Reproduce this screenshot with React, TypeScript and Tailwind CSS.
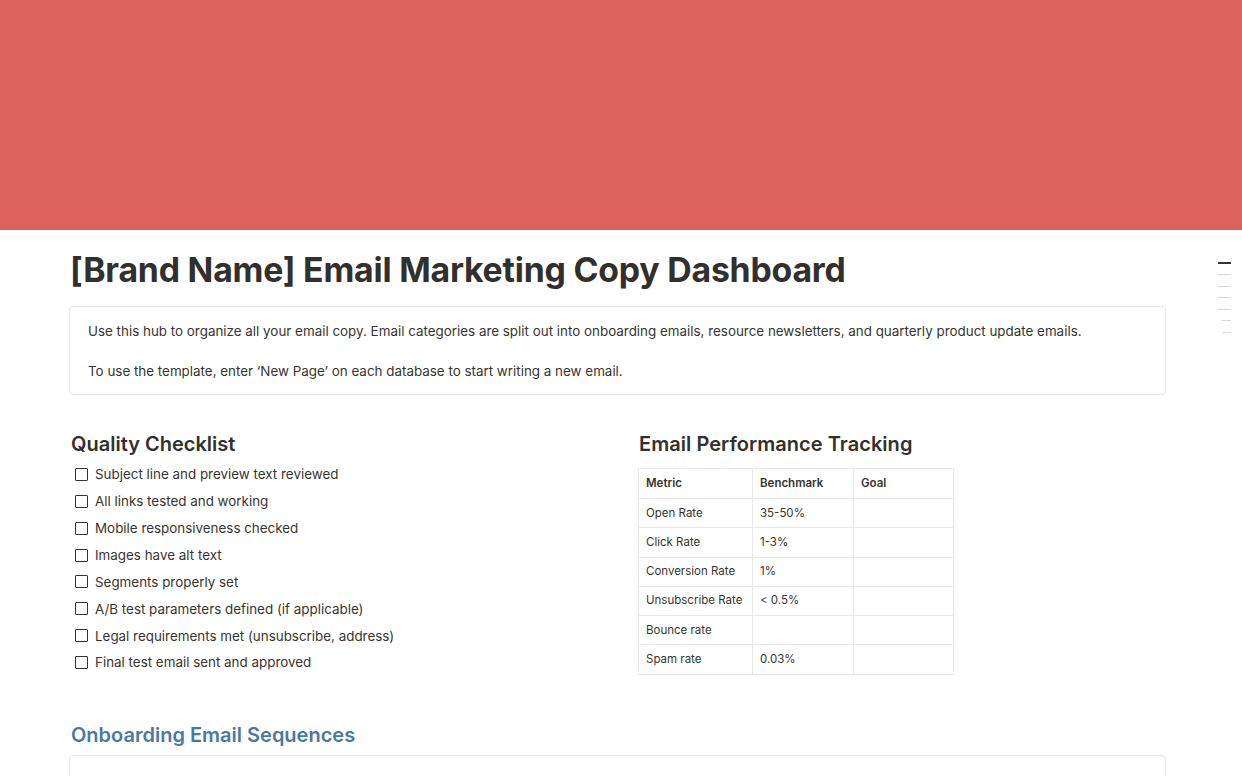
import React from "react";

const checklist = [
  "Subject line and preview text reviewed",
  "All links tested and working",
  "Mobile responsiveness checked",
  "Images have alt text",
  "Segments properly set",
  "A/B test parameters defined (if applicable)",
  "Legal requirements met (unsubscribe, address)",
  "Final test email sent and approved",
];

const rows: [string, string, string][] = [
  ["Open Rate", "35-50%", ""],
  ["Click Rate", "1-3%", ""],
  ["Conversion Rate", "1%", ""],
  ["Unsubscribe Rate", "< 0.5%", ""],
  ["Bounce rate", "", ""],
  ["Spam rate", "0.03%", ""],
];

export default function App() {
  return (
    <div
      className="relative w-[1242px] h-[776px] overflow-hidden bg-white text-[#37352f]"
      style={{ fontFamily: "Inter, 'Noto Sans', sans-serif" }}
    >
      <div className="h-[230px] bg-[#db615d]" />

      {/* TOC lines */}
      <div className="absolute left-[1218px] top-[262px] flex flex-col items-end gap-[10.5px] w-[13px]">
        <div className="h-[1.5px] w-[13px] bg-[#37352f]" />
        <div className="h-[1px] w-[13px] bg-[#d9d9d6]" />
        <div className="h-[1px] w-[13px] bg-[#d9d9d6]" />
        <div className="h-[1px] w-[13px] bg-[#d9d9d6]" />
        <div className="h-[1px] w-[13px] bg-[#d9d9d6]" />
        <div className="h-[1px] w-[9px] bg-[#d9d9d6]" />
        <div className="h-[1px] w-[9px] bg-[#d9d9d6]" />
      </div>

      <div className="pl-[69px] w-[1166px]">
        <h1 className="pt-[18px] pl-[1px] text-[33.8px] leading-[44px] font-bold text-[#32302c] tracking-[-0.2px]">
          [Brand Name] Email Marketing Copy Dashboard
        </h1>

        <div className="mt-[14px] h-[89px] rounded-[4px] border border-[#e6e6e4] px-[18px] pt-[14px] text-[13.4px] leading-[20px] text-[#37352f]">
          <p>
            Use this hub to organize all your email copy. Email categories are split out into onboarding emails, resource newsletters, and quarterly product update emails.
          </p>
          <p className="mt-[20px]">
            To use the template, enter ‘New Page’ on each database to start writing a new email.
          </p>
        </div>

        <div className="mt-[35px] flex">
          <div className="w-[570px] pl-[2px]">
            <h2 className="text-[20px] leading-[28px] font-semibold text-[#32302c]">
              Quality Checklist
            </h2>
            <ul className="mt-[3px] flex flex-col">
              {checklist.map((item) => (
                <li key={item} className="flex items-center h-[26.86px] text-[13.4px] text-[#37352f]">
                  <span className="ml-[4px] mr-[7px] w-[13px] h-[13px] border-[1.5px] border-[#37352f] rounded-[1px]" />
                  {item}
                </li>
              ))}
            </ul>
          </div>

          <div className="flex-1">
            <h2 className="text-[20px] leading-[28px] font-semibold text-[#32302c] tracking-[0.05px]">
              Email Performance Tracking
            </h2>
            <table className="mt-[10px] -ml-[1px] border-collapse text-[11.5px] text-[#37352f]">
              <thead>
                <tr className="h-[30px]">
                  <th className="w-[114px] border border-[#e9e9e7] px-[7px] text-left font-semibold whitespace-nowrap">Metric</th>
                  <th className="w-[101px] border border-[#e9e9e7] px-[7px] text-left font-semibold whitespace-nowrap">Benchmark</th>
                  <th className="w-[100px] border border-[#e9e9e7] px-[7px] text-left font-semibold whitespace-nowrap">Goal</th>
                </tr>
              </thead>
              <tbody>
                {rows.map((r) => (
                  <tr key={r[0]} className="h-[29.3px]">
                    <td className="border border-[#e9e9e7] px-[7px] whitespace-nowrap">{r[0]}</td>
                    <td className="border border-[#e9e9e7] px-[7px] whitespace-nowrap">{r[1]}</td>
                    <td className="border border-[#e9e9e7] px-[7px] whitespace-nowrap">{r[2]}</td>
                  </tr>
                ))}
              </tbody>
            </table>
          </div>
        </div>

        <h2 className="mt-[45px] pl-[2px] text-[20px] leading-[28px] font-semibold text-[#4a7aa1]">
          Onboarding Email Sequences
        </h2>
        <div className="mt-[6px] h-[60px] rounded-[4px] border border-[#e6e6e4]" />
      </div>
    </div>
  );
}
